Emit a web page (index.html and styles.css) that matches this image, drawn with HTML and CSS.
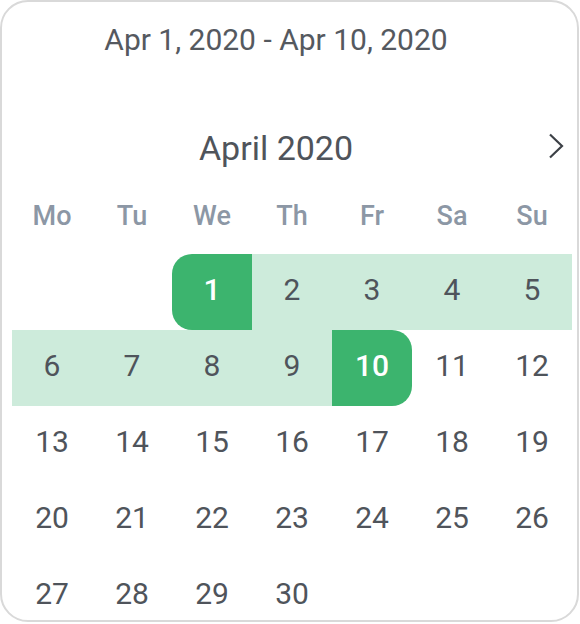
FILE: index.html
```html
<!DOCTYPE html>
<html>
<head>
<meta charset="utf-8">
<link rel="stylesheet" href="styles.css">
</head>
<body>
<div class="card">
  <div class="range">Apr 1, 2020 - Apr 10, 2020</div>
  <div class="header">
    <div class="month">April 2020</div>
    <div class="next">
      <svg width="16" height="26" viewBox="0 0 16 26"><path d="M2 1.5 L14 13 L2 24.5" fill="none" stroke="#3d4147" stroke-width="2.2"/></svg>
    </div>
  </div>
  <div class="weekdays">
    <span>Mo</span><span>Tu</span><span>We</span><span>Th</span><span>Fr</span><span>Sa</span><span>Su</span>
  </div>
  <div class="days">
    <span></span><span></span>
    <span class="sel start">1</span><span class="in">2</span><span class="in">3</span><span class="in">4</span><span class="in">5</span>
    <span class="in">6</span><span class="in">7</span><span class="in">8</span><span class="in">9</span><span class="sel end">10</span><span>11</span><span>12</span>
    <span>13</span><span>14</span><span>15</span><span>16</span><span>17</span><span>18</span><span>19</span>
    <span>20</span><span>21</span><span>22</span><span>23</span><span>24</span><span>25</span><span>26</span>
    <span>27</span><span>28</span><span>29</span><span>30</span>
  </div>
</div>
</body>
</html>
```
FILE: styles.css
```css
html, body {
  margin: 0;
  padding: 0;
  background: #fff;
}
body {
  font-family: Roboto, "Liberation Sans", sans-serif;
  color: #4f545b;
}
.card {
  box-sizing: border-box;
  width: 579px;
  height: 622px;
  border: 2px solid #d9d9d9;
  border-radius: 28px;
  padding: 0 5px 0 10px;
  overflow: hidden;
}
.range {
  height: 76px;
  line-height: 76px;
  font-size: 30px;
  text-align: center;
  padding-right: 32px;
  color: #55595f;
}
.header {
  margin-top: 42px;
  height: 56px;
  display: flex;
  align-items: center;
}
.month {
  flex: 1;
  text-align: center;
  font-size: 34px;
  color: #4f545b;
}
.next {
  width: 32px;
  display: flex;
  justify-content: center;
  align-items: center;
  margin-top: -4px;
}
.next svg { display: block; }
.weekdays {
  margin-top: 20px;
  display: grid;
  grid-template-columns: repeat(7, 80px);
  height: 40px;
  line-height: 40px;
}
.weekdays span {
  text-align: center;
  font-size: 27px;
  font-weight: 500;
  color: #8c97a5;
}
.days {
  margin-top: 18px;
  display: grid;
  grid-template-columns: repeat(7, 80px);
  grid-auto-rows: 76px;
}
.days span {
  display: flex;
  align-items: center;
  justify-content: center;
  padding-bottom: 6px;
  box-sizing: border-box;
  font-size: 30px;
  color: #4f545b;
}
.days .in {
  background: #cdebdb;
}
.days .sel {
  background: #3cb46e;
  color: #fff;
  font-weight: 500;
}
.days .start {
  border-radius: 20px 0 0 20px;
}
.days .end {
  border-radius: 0 20px 20px 0;
}
```
